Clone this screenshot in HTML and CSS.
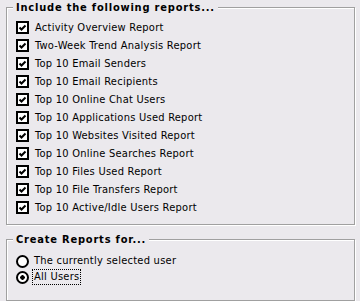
FILE: index.html
```html
<!DOCTYPE html>
<html lang="en">

<head>
    <title>Report Options</title>
    <!--Stylesheet-->
    <link rel="stylesheet" href="styles.css">
</head>

<body>
    <fieldset class="group reports">
        <legend>Include the following reports...</legend>
        <label class="item"><span class="box"><svg viewBox="0 0 9 9"><path d="M1.5 4.5 L3.5 6.5 L7.5 2.5"/></svg></span>Activity Overview Report</label>
        <label class="item"><span class="box"><svg viewBox="0 0 9 9"><path d="M1.5 4.5 L3.5 6.5 L7.5 2.5"/></svg></span>Two-Week Trend Analysis Report</label>
        <label class="item"><span class="box"><svg viewBox="0 0 9 9"><path d="M1.5 4.5 L3.5 6.5 L7.5 2.5"/></svg></span>Top 10 Email Senders</label>
        <label class="item"><span class="box"><svg viewBox="0 0 9 9"><path d="M1.5 4.5 L3.5 6.5 L7.5 2.5"/></svg></span>Top 10 Email Recipients</label>
        <label class="item"><span class="box"><svg viewBox="0 0 9 9"><path d="M1.5 4.5 L3.5 6.5 L7.5 2.5"/></svg></span>Top 10 Online Chat Users</label>
        <label class="item"><span class="box"><svg viewBox="0 0 9 9"><path d="M1.5 4.5 L3.5 6.5 L7.5 2.5"/></svg></span>Top 10 Applications Used Report</label>
        <label class="item"><span class="box"><svg viewBox="0 0 9 9"><path d="M1.5 4.5 L3.5 6.5 L7.5 2.5"/></svg></span>Top 10 Websites Visited Report</label>
        <label class="item"><span class="box"><svg viewBox="0 0 9 9"><path d="M1.5 4.5 L3.5 6.5 L7.5 2.5"/></svg></span>Top 10 Online Searches Report</label>
        <label class="item"><span class="box"><svg viewBox="0 0 9 9"><path d="M1.5 4.5 L3.5 6.5 L7.5 2.5"/></svg></span>Top 10 Files Used Report</label>
        <label class="item"><span class="box"><svg viewBox="0 0 9 9"><path d="M1.5 4.5 L3.5 6.5 L7.5 2.5"/></svg></span>Top 10 File Transfers Report</label>
        <label class="item"><span class="box"><svg viewBox="0 0 9 9"><path d="M1.5 4.5 L3.5 6.5 L7.5 2.5"/></svg></span>Top 10 Active/Idle Users Report</label>
    </fieldset>

    <fieldset class="group users">
        <legend>Create Reports for...</legend>
        <label class="option"><span class="radio"></span><span class="caption">The currently selected user</span></label>
        <label class="option"><span class="radio checked"></span><span class="caption focus">All Users</span></label>
    </fieldset>
</body>

</html>
```

FILE: styles.css
```css
*,
*:before,
*:after {
    padding: 0;
    margin: 0;
    box-sizing: border-box;
}

body {
    background: #ebe9ed;
    font-family: "DejaVu Sans Condensed", "DejaVu Sans", sans-serif;
    font-stretch: condensed;
    font-size: 11px;
    letter-spacing: 0.25px;
    color: #000;
    padding-top: 1px;
}

/* etched group box */
.group {
    margin: 0 5px 0 6px;
    border: 1px solid #a0a0a0;
    box-shadow: inset 1px 1px 0 #fff, 1px 1px 0 #fff;
    padding: 4px 6px 8px;
}

.group legend {
    font-weight: bold;
    letter-spacing: 0.8px;
    line-height: 13px;
    padding: 0 3px;
    background: #ebe9ed;
}

.users {
    margin-top: 8px;
    padding-top: 7px;
    padding-bottom: 15px;
}

.item {
    display: flex;
    align-items: center;
    height: 18px;
    padding-left: 3px;
}

.box {
    width: 13px;
    height: 13px;
    border: 2px solid #000;
    background: #fff;
    margin-right: 6px;
    flex-shrink: 0;
}

.box svg {
    display: block;
    width: 9px;
    height: 9px;
}

.box path {
    fill: none;
    stroke: #000;
    stroke-width: 2;
}

.option {
    display: flex;
    align-items: center;
    height: 16px;
    padding-left: 3px;
}

.radio {
    width: 13px;
    height: 13px;
    border: 2px solid #000;
    border-radius: 50%;
    background: #fff;
    margin-right: 3px;
    flex-shrink: 0;
}

.radio.checked {
    background: radial-gradient(circle, #000 2px, #fff 2.5px);
}

.caption {
    border: 1px solid transparent;
    padding: 0 1px;
    line-height: 14px;
}

.caption.focus {
    border: 1px dotted #000;
}
```
